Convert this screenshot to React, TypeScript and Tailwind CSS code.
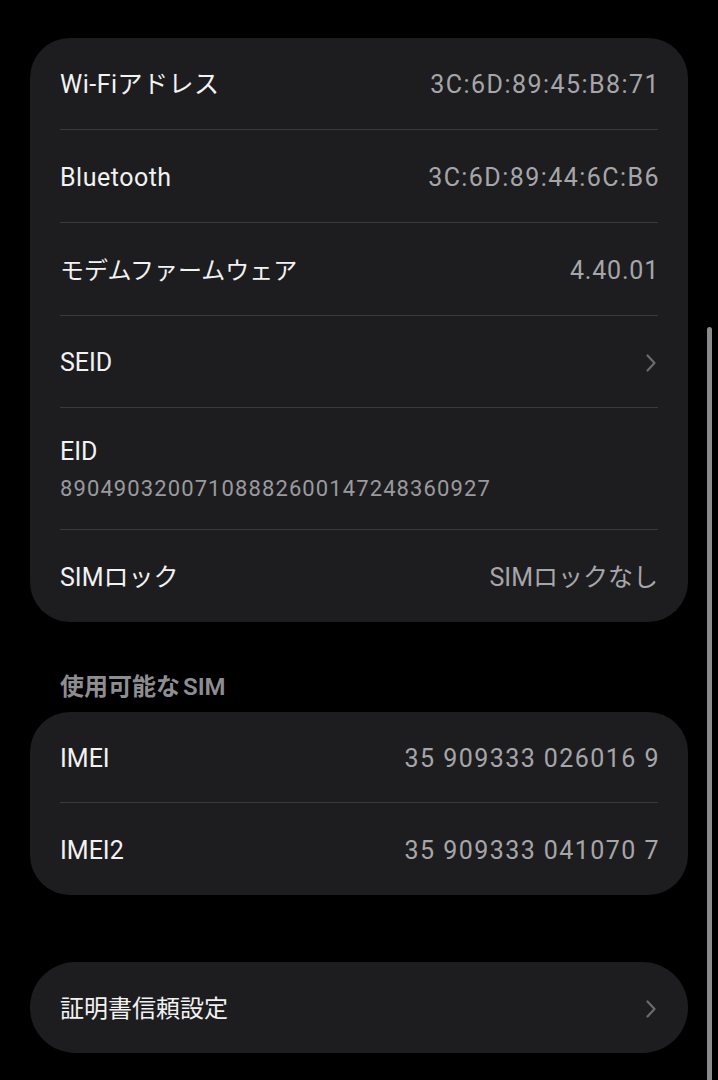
import React from "react";

const font = { fontFamily: '"Roboto", "Noto Sans CJK JP", sans-serif' };

function Chevron() {
  return (
    <svg width="14" height="20" viewBox="0 0 14 20" fill="none" className="shrink-0">
      <path d="M3.5 2.5 L10.5 10 L3.5 17.5" stroke="#6b6b6f" strokeWidth="2.2" strokeLinecap="round" strokeLinejoin="round" />
    </svg>
  );
}

function Sep() {
  return <div className="mx-[30px] h-px bg-[#3a3a3c]" />;
}

function Row({
  label,
  value,
  chevron,
  h,
  labelCls = "text-[25px]",
  valueCls = "text-[25px] tracking-[1.45px] -mr-[2px]",
}: {
  label: string;
  value?: string;
  chevron?: boolean;
  h: string;
  labelCls?: string;
  valueCls?: string;
}) {
  return (
    <div className={`flex items-center justify-between px-[30px] pt-[3px] ${h}`}>
      <span className={`${labelCls} text-[#f2f2f2]`}>{label}</span>
      {value && <span className={`${valueCls} text-[#a6a6aa]`}>{value}</span>}
      {chevron && <Chevron />}
    </div>
  );
}

export default function App() {
  return (
    <div className="relative min-h-[1080px] w-[718px] bg-black pt-[38px] overflow-hidden" style={font}>
      <div className="mx-[30px] rounded-[40px] bg-[#1d1d1f]">
        <Row label="Wi-Fiアドレス" value="3C:6D:89:45:B8:71" h="h-[91px]" labelCls="text-[25px] tracking-[0.5px]" />
        <Sep />
        <Row label="Bluetooth" value="3C:6D:89:44:6C:B6" h="h-[92px]" labelCls="text-[25px] tracking-[0.5px]" />
        <Sep />
        <Row label="モデムファームウェア" value="4.40.01" h="h-[92px]" labelCls="text-[24px]" valueCls="text-[25px] tracking-[0.8px] -mr-[1px]" />
        <Sep />
        <Row label="SEID" chevron h="h-[91px]" />
        <Sep />
        <div className="flex h-[121px] flex-col justify-center gap-[6px] px-[30px] pt-[2px]">
          <span className="text-[25px] leading-[32px] text-[#f2f2f2]">EID</span>
          <span className="text-[22px] leading-[30px] tracking-[1.1px] text-[#9a9a9e]">89049032007108882600147248360927</span>
        </div>
        <Sep />
        <Row label="SIMロック" value="SIMロックなし" h="h-[92px]" valueCls="text-[25px]" />
      </div>

      <div className="mt-[50px] mb-[10px] px-[60px] text-[24px] font-semibold leading-[30px] text-[#8e8e92]">
        使用可能な<span className="ml-[3px]">SIM</span>
      </div>

      <div className="mx-[30px] rounded-[40px] bg-[#1d1d1f]">
        <Row label="IMEI" value="35 909333 026016 9" h="h-[90px]" />
        <Sep />
        <Row label="IMEI2" value="35 909333 041070 7" h="h-[92px]" />
      </div>

      <div className="mx-[30px] mt-[67px] rounded-[46px] bg-[#1d1d1f]">
        <Row label="証明書信頼設定" chevron h="h-[91px]" labelCls="text-[24px]" />
      </div>

      <div className="absolute left-[707px] top-[327px] h-[800px] w-[5px] rounded-full bg-[#8a8a8c]" />
    </div>
  );
}
